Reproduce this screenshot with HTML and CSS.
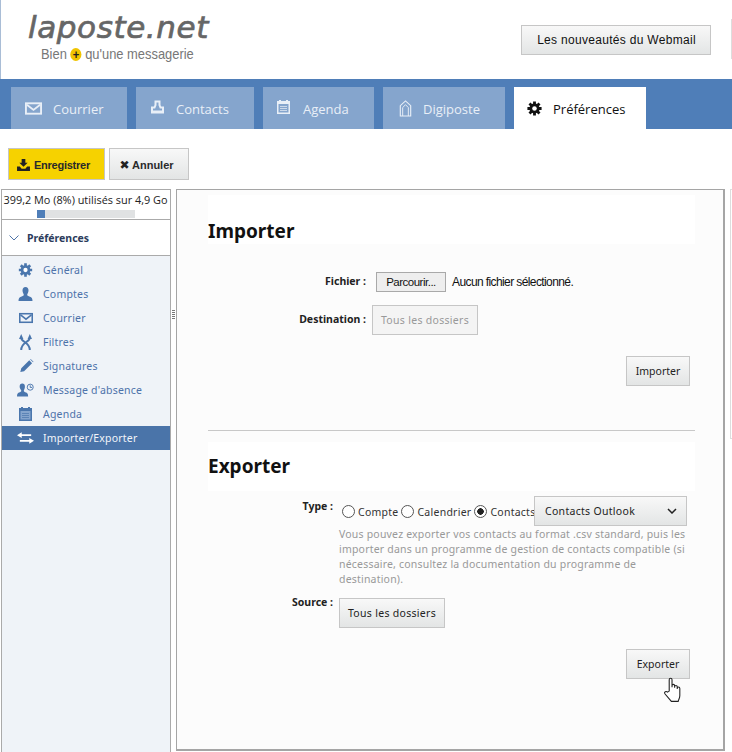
FILE: index.html
```html
<!DOCTYPE html>
<html lang="fr">
<head>
  <meta charset="UTF-8" />
  <title>Webmail laposte.net - Préférences</title>
  <link rel="stylesheet" href="styles.css">
</head>
<body>

  <svg class="sprites" width="0" height="0">
    <symbol id="i-gear" viewBox="-1 -1 18 18">
      <path d="M8 .5V15.500M.5 8H15.500M2.700 2.700L13.300 13.300M13.300 2.700L2.700 13.300" stroke="currentColor" stroke-width="3" fill="none"/>
      <circle cx="8" cy="8" r="5.400" fill="currentColor"/>
      <circle class="gear-hole" cx="8" cy="8" r="2.400"/>
    </symbol>
    <symbol id="i-mail" viewBox="0 0 18 13">
      <rect x="1" y="1" width="16" height="11" fill="none" stroke="currentColor" stroke-width="2"/>
      <path d="M2 2.500L9 8L16 2.500" fill="none" stroke="currentColor" stroke-width="2"/>
    </symbol>
    <symbol id="i-stamp" viewBox="0 0 13 14">
      <path d="M4.500 1.500h4v3.500l1 2.500h2.500v5H1v-5h2.500l1-2.500z" fill="none" stroke="currentColor" stroke-width="2"/>
      <path d="M1 10.500h11v2.500H1z" fill="currentColor"/>
    </symbol>
    <symbol id="i-cal" viewBox="-1 -1 15 16">
      <path d="M0 1h2V0h2v1h5V0h2v1h2v13H0z" fill="currentColor"/>
      <path class="cal-face" d="M1.500 4h10v8.500h-10z"/>
      <path d="M3 6h7v1H3zM3 8h7v1H3zM3 10h7v1H3z" fill="currentColor" opacity=".7"/>
    </symbol>
    <symbol id="i-digi" viewBox="0 0 13 18">
      <path d="M1 17V6L6.500 1L12 6V17Z" fill="none" stroke="currentColor" stroke-width="1.200"/>
      <path d="M3.500 17V8L6.500 5L9.500 8V17" fill="none" stroke="currentColor" stroke-width="1"/>
    </symbol>
    <symbol id="i-user" viewBox="-1 -1 16 16">
      <path d="M4 3.500a3 3.500 0 0 1 6 0c0 2-1 3-1.300 4.200c0 1 1 1.300 2.800 2c1.500.6 2.500 1.300 2.500 4.300H0c0-3 1-3.700 2.500-4.300c1.800-.7 2.800-1 2.800-2C5 6.500 4 5.500 4 3.500z" fill="currentColor"/>
    </symbol>
    <symbol id="i-filter" viewBox="0 0 13 16">
      <path d="M2.200 4C2.200 8 10.800 8 10.800 16M10.800 4C10.800 8 2.200 8 2.200 16" fill="none" stroke="currentColor" stroke-width="2"/>
      <path d="M0 5L2.200 0L4.400 5zM8.600 5L10.800 0L13 5z" fill="currentColor"/>
    </symbol>
    <symbol id="i-pen" viewBox="-3 -1 17 17">
      <path d="M0 14L1 10L9.500 1.500L12.500 4.500L4 13zM10.500.5L11 0L14 3L13.500 3.500z" fill="currentColor"/>
    </symbol>
    <symbol id="i-away" viewBox="0 0 18 14">
      <path d="M2.800 3.500a2.800 3.500 0 0 1 5.600 0c0 2-1 3-1.200 4.200c0 1 1 1.300 2.500 2c1.300.6 2.100 1.300 2.100 4.300H0c0-3 .8-3.700 2.100-4.300c1.500-.7 2.500-1 2.500-2C4.300 6.500 2.800 5.500 2.800 3.500z" fill="currentColor"/>
      <circle cx="14" cy="4" r="3.200" fill="none" stroke="currentColor"/>
      <path d="M14 2V4.300H16" fill="none" stroke="currentColor"/>
    </symbol>
    <symbol id="i-swap" viewBox="0 0 18 12">
      <path d="M4 3H15M3 9H14" stroke="currentColor" stroke-width="2" fill="none"/>
      <path d="M5 0V6L0 3zM13 6V12L18 9z" fill="currentColor"/>
    </symbol>
    <symbol id="i-save" viewBox="0 0 14 13">
      <path d="M5 0h4v4h2.500L7 8.500L2.500 4H5z" fill="currentColor"/>
      <path d="M0 8h3l2 2.500h4L11 8h3v5H0z" fill="currentColor"/>
    </symbol>
  </svg>

  <div class="page">
    <header class="top">
      <div class="logo">
        <div class="logo-name">laposte.net</div>
        <div class="logo-tag">Bien <span class="plus">+</span> qu'une messagerie</div>
      </div>
      <button class="btn btn-news">Les nouveautés du Webmail</button>
      <div class="top-edge"></div>
    </header>

    <nav class="tabs">
      <a class="tab tab-mail"><svg class="tab-icon icon-mail"><use href="#i-mail"/></svg>Courrier</a>
      <a class="tab tab-contacts"><svg class="tab-icon icon-stamp"><use href="#i-stamp"/></svg>Contacts</a>
      <a class="tab tab-agenda"><svg class="tab-icon icon-cal"><use href="#i-cal"/></svg>Agenda</a>
      <a class="tab tab-digi"><svg class="tab-icon icon-digi"><use href="#i-digi"/></svg>Digiposte</a>
      <a class="tab tab-prefs active"><svg class="tab-icon icon-gear"><use href="#i-gear"/></svg>Préférences</a>
    </nav>

    <div class="toolbar">
      <button class="btn btn-save"><svg class="btn-icon"><use href="#i-save"/></svg>Enregistrer</button>
      <button class="btn btn-cancel"><span class="cross">✖</span>Annuler</button>
    </div>

    <div class="workspace">
      <aside class="sidebar">
        <div class="quota">
          <div class="quota-text">399,2 Mo (8%) utilisés sur 4,9 Go</div>
          <div class="quota-bar"><div class="quota-fill"></div></div>
        </div>
        <div class="side-title">
          <svg class="chevron" viewBox="0 0 10 6"><path d="M.5.5L5 5L9.500.5" fill="none" stroke="currentColor"/></svg>
          Préférences
        </div>
        <ul class="side-list">
          <li><svg class="side-icon"><use href="#i-gear"/></svg>Général</li>
          <li><svg class="side-icon"><use href="#i-user"/></svg>Comptes</li>
          <li><svg class="side-icon side-mail"><use href="#i-mail"/></svg>Courrier</li>
          <li><svg class="side-icon"><use href="#i-filter"/></svg>Filtres</li>
          <li><svg class="side-icon"><use href="#i-pen"/></svg>Signatures</li>
          <li><svg class="side-icon"><use href="#i-away"/></svg>Message d'absence</li>
          <li><svg class="side-icon"><use href="#i-cal"/></svg>Agenda</li>
          <li class="selected"><svg class="side-icon"><use href="#i-swap"/></svg>Importer/Exporter</li>
        </ul>
      </aside>

      <div class="splitter"><span></span><span></span><span></span><span></span><span></span></div>

      <main class="panel">
        <section class="block block-first">
          <h2>Importer</h2>
          <div class="row row-file">
            <label class="lbl lbl-wide">Fichier :</label>
            <button class="browse">Parcourir...</button>
            <span class="file-name">Aucun fichier sélectionné.</span>
          </div>
          <div class="row row-dest">
            <label class="lbl lbl-wide">Destination :</label>
            <button class="btn btn-folder btn-disabled">Tous les dossiers</button>
          </div>
          <div class="row-action action-import">
            <button class="btn btn-action">Importer</button>
          </div>
        </section>

        <hr class="sep">

        <section class="block">
          <h2>Exporter</h2>
          <div class="row row-type">
            <label class="lbl lbl-narrow">Type :</label>
            <div class="choices">
              <label class="choice"><input type="radio" name="type">Compte</label>
              <label class="choice"><input type="radio" name="type">Calendrier</label>
              <label class="choice"><input type="radio" name="type" checked>Contacts</label>
            </div>
            <div class="btn picker">Contacts Outlook
              <svg class="picker-arrow" viewBox="0 0 10 6"><path d="M1 1L5 5L9 1" fill="none" stroke="currentColor" stroke-width="1.500"/></svg>
            </div>
          </div>
          <p class="hint">Vous pouvez exporter vos contacts au format .csv standard, puis les importer dans un programme de gestion de contacts compatible (si nécessaire, consultez la documentation du programme de destination).</p>
          <div class="row row-source">
            <label class="lbl lbl-narrow lbl-source">Source :</label>
            <button class="btn btn-folder">Tous les dossiers</button>
          </div>
          <div class="row-action action-export">
            <button class="btn btn-action">Exporter</button>
          </div>
        </section>

        <svg class="hand" viewBox="0 0 18 24">
          <path d="M5.500 13V2.500a1.300 1.300 0 0 1 2.600 0V9.500V8a1.200 1.200 0 0 1 2.400 0V10V9a1.200 1.200 0 0 1 2.400 0V11V10.500a1.200 1.200 0 0 1 2.400 0V17c0 2.500-1 3.500-1.500 5.500H7.500L1.500 15.500c-1-1.500 1-3 2.500-1.500z" fill="#fff" stroke="#222" stroke-width="1"/>
        </svg>
      </main>

      <div class="right-edge"></div>
    </div>
  </div>

</body>
</html>
```

FILE: styles.css
```css
* {
  box-sizing: border-box;
}

body {
  margin: 0;
  background: #fff;
  font-family: "Noto Sans", sans-serif;
  font-size: 11px;
  color: #222;
}

.sprites {
  position: absolute;
}

.page {
  width: 732px;
  height: 752px;
  overflow: hidden;
  display: flex;
  flex-direction: column;
}

/* header */
.top {
  height: 79px;
  flex: none;
  display: flex;
  border-left: 1px solid #a9bdd6;
}

.logo {
  width: 520px;
  padding: 9px 0 0 27px;
}

.logo-name {
  font-family: "DejaVu Sans", sans-serif;
  font-style: italic;
  font-size: 31px;
  line-height: 36px;
  letter-spacing: .6px;
  color: #666;
  -webkit-text-stroke: .7px #666;
}

.logo-tag {
  margin-left: 13px;
  font-family: "Liberation Sans", sans-serif;
  font-size: 15px;
  line-height: 17px;
  color: #777;
  white-space: nowrap;
  transform: scaleX(.86);
  transform-origin: left;
}

.plus {
  display: inline-block;
  width: 13px;
  height: 13px;
  border-radius: 50%;
  background: #f0c400;
  color: #222;
  font: bold 13px/13px "Liberation Sans", sans-serif;
  text-align: center;
}

.btn {
  background: linear-gradient(#f8f8f8, #e3e5e5);
  border: 1px solid #c6c6c6;
  font-family: "Noto Sans", sans-serif;
  font-size: 11px;
  color: #222;
  padding: 0;
}

.btn-news {
  width: 190px;
  height: 30px;
  margin-top: 25px;
  padding-left: 1px;
  font-family: "Liberation Sans", sans-serif;
  font-size: 12px;
  letter-spacing: .3px;
  color: #111;
}

.top-edge {
  width: 1px;
  height: 40px;
  margin: 19px 0 0 20px;
  background: #ddd;
}

/* tabs */
.tabs {
  height: 50px;
  flex: none;
  display: flex;
  align-items: flex-end;
  gap: 9px;
  padding-left: 11px;
  background: #4f7eb8;
}

.tab {
  height: 42px;
  display: flex;
  align-items: center;
  background: #85a5cd;
  color: #e9eff7;
  font-family: "Open Sans", sans-serif;
  font-size: 13px;
  line-height: 20px;
  padding-top: 1px;
}

.tab-mail { width: 116px; padding-left: 14px; }
.tab-contacts { width: 118px; padding-left: 15px; }
.tab-agenda { width: 111px; padding-left: 13px; }
.tab-digi { width: 122px; padding-left: 16px; }
.tab-prefs { width: 132px; padding-left: 12px; }

.tab.active {
  background: #fff;
  color: #111;
}

.tab-icon {
  flex: none;
}

.icon-mail { width: 17px; height: 13px; margin: 0 11px 1px 0; }
.icon-stamp { width: 13px; height: 14px; margin: 0 12px 3px 0; }
.icon-cal { width: 15px; height: 16px; margin: 0 12px 4px 0; }
.icon-digi { width: 13px; height: 17px; margin: 0 11px 1px 0; }
.icon-gear { width: 17px; height: 17px; margin: 0 10px 1px 0; }

.gear-hole {
  fill: #fff;
}

.cal-face {
  fill: #85a5cd;
}

/* toolbar */
.toolbar {
  height: 60px;
  flex: none;
  display: flex;
  gap: 4px;
  padding: 19px 0 0 8px;
}

.btn-save,
.btn-cancel {
  height: 32px;
  display: flex;
  align-items: center;
  padding-top: 1px;
  font-family: "Liberation Sans", sans-serif;
  font-weight: bold;
  font-size: 11px;
  color: #2a2a2a;
}

.btn-save {
  width: 97px;
  padding-left: 8px;
  background: #f6d200;
  letter-spacing: -.25px;
}

.btn-icon {
  width: 13px;
  height: 12px;
  margin-right: 4px;
  color: #222;
}

.btn-cancel {
  width: 80px;
  padding-left: 7px;
}

.cross {
  width: 15px;
  font-size: 12px;
  font-family: "DejaVu Sans", sans-serif;
  color: #222;
}

/* sidebar */
.workspace {
  flex: 1;
  display: flex;
  align-items: stretch;
  padding-left: 1px;
  min-height: 0;
}

.sidebar {
  width: 170px;
  flex: none;
  display: flex;
  flex-direction: column;
  background: #eff3f8;
  border: 1px solid #aaa;
  border-bottom: 0;
}

.quota {
  height: 30px;
  background: #fff;
  border-bottom: 1px solid #aaa;
  text-align: center;
}

.quota-text {
  margin-left: -1px;
  font-family: "Open Sans", sans-serif;
  font-size: 10.900px;
  line-height: 20px;
  color: #222;
  white-space: nowrap;
}

.quota-bar {
  width: 98px;
  height: 8px;
  margin-left: 35px;
  background: #e0e2e3;
}

.quota-fill {
  width: 8px;
  height: 8px;
  background: #4f7eb8;
}

.side-title {
  height: 36px;
  display: flex;
  align-items: center;
  background: #fff;
  border-bottom: 1px solid #aaa;
  font-weight: bold;
  font-size: 10.500px;
  color: #2c3c5c;
}

.chevron {
  width: 10px;
  height: 6px;
  margin: 0 8px 0 7px;
  color: #4f74a8;
}

.side-list {
  list-style: none;
  margin: 0;
  padding: 2px 0 0;
}

.side-list li {
  height: 24px;
  display: flex;
  align-items: center;
  font-size: 10.500px;
  letter-spacing: .2px;
  color: #4d72aa;
}

.side-icon {
  width: 17px;
  height: 16px;
  margin: 0 9px 0 15px;
  flex: none;
  color: #4a76ad;
}

.side-mail {
  width: 14px;
  margin: 0 10.500px 0 16.500px;
}

.side-list .gear-hole,
.side-list .cal-face {
  fill: #eff3f8;
}

.side-list li.selected {
  background: #4a74a9;
  color: #f2f5fa;
}

.selected .side-icon {
  color: #fff;
}

.splitter {
  width: 5px;
  height: 563px;
  flex: none;
  display: flex;
  flex-direction: column;
  justify-content: center;
  gap: 1px;
  align-items: center;
  padding-bottom: 312px;
}

.splitter span {
  width: 3px;
  height: 1px;
  background: #777;
}

/* main panel */
.panel {
  width: 549px;
  height: 562px;
  flex: none;
  position: relative;
  background: #fcfcfc;
  border: 1px solid #a5a5a5;
  border-width: 1px 2px 2px 1px;
  padding: 5px 28px 0 31px;
}

.block h2 {
  height: 49px;
  margin: 0;
  background: #fff;
  font-size: 19px;
  font-weight: bold;
  line-height: 48px;
  color: #111;
}

.block-first h2 {
  padding-top: 24px;
  line-height: 24px;
}

.row {
  display: flex;
}

.lbl {
  flex: none;
  font-size: 10.500px;
  font-weight: bold;
  text-align: right;
  line-height: 15px;
  color: #222;
}

.lbl-wide { width: 158px; }
.lbl-narrow { width: 125px; }

.row-file {
  height: 20px;
  margin-top: 28px;
  align-items: center;
}

.row-file .lbl,
.row-dest .lbl {
  padding-bottom: 1px;
}

.browse {
  width: 70px;
  height: 20px;
  margin-left: 10px;
  padding: 0;
  background: #eee;
  border: 1px solid #a9a9a9;
  font-family: "Liberation Sans", sans-serif;
  font-size: 11.500px;
  letter-spacing: -.5px;
  color: #111;
}

.file-name {
  margin-left: 6px;
  font-family: "Liberation Sans", sans-serif;
  font-size: 12px;
  letter-spacing: -.6px;
  color: #111;
}

.row-dest {
  height: 30px;
  margin-top: 13px;
  align-items: center;
}

.btn-folder {
  width: 106px;
  height: 30px;
  font-size: 10.500px;
  letter-spacing: .3px;
}

.row-dest .btn-folder {
  margin-left: 6px;
}

.btn-disabled {
  background: #f4f4f4;
  color: #999;
}

.row-action {
  margin-top: 21px;
  padding-right: 5px;
  display: flex;
  justify-content: flex-end;
}

.btn-action {
  width: 64px;
  height: 30px;
  font-size: 10.500px;
}

.sep {
  height: 1px;
  margin: 44px 0 11px;
  border: 0;
  background: #c8c8c8;
}

.row-type {
  height: 30px;
  margin-top: 5px;
}

.row-type .lbl {
  padding-top: 3px;
}

.choices {
  display: flex;
  align-items: center;
  width: 192px;
  margin-left: 9px;
  padding-top: 1px;
}

.choice {
  display: flex;
  align-items: center;
  font-size: 10.500px;
  letter-spacing: .25px;
  white-space: nowrap;
  margin-right: 3px;
  color: #333;
}

.choice input {
  appearance: none;
  width: 13px;
  height: 13px;
  margin: 0 3px 0 0;
  border: 1px solid #555;
  border-radius: 50%;
  background: #fff;
}

.choice input:checked {
  background: radial-gradient(circle, #222 3px, #fff 3.500px);
}

.picker {
  width: 153px;
  height: 30px;
  flex: none;
  display: flex;
  align-items: center;
  justify-content: space-between;
  padding: 0 9px 0 10px;
  font-size: 10.500px;
  letter-spacing: .3px;
}

.picker-arrow {
  width: 10px;
  height: 6px;
}

.hint {
  width: 352px;
  margin: 1px 0 0 131px;
  font-size: 10.500px;
  line-height: 15px;
  letter-spacing: .2px;
  color: #999;
}

.row-source {
  height: 30px;
  margin-top: 11px;
}

.lbl-source {
  margin-top: -3px;
  margin-right: 6px;
}

/* mouse pointer from the capture */
.hand {
  position: absolute;
  left: 486px;
  top: 487px;
  width: 20px;
  height: 26px;
}

.right-edge {
  width: 7px;
  height: 250px;
  margin-left: 5px;
  border: 1px solid #ddd;
  border-right: 0;
}
```
